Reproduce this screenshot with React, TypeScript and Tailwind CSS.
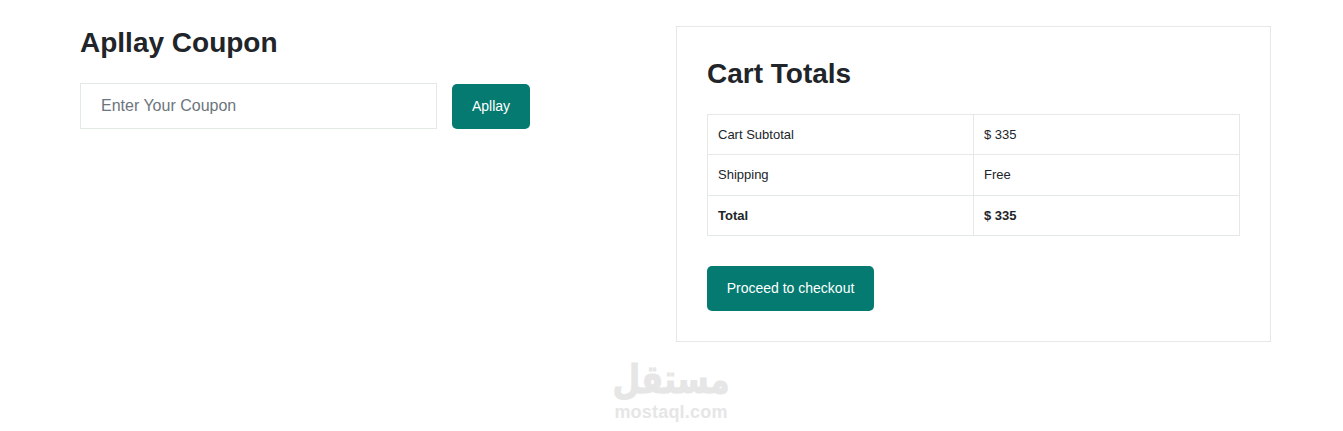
export default function App() {
  return (
    <div className="relative h-[431px] w-full overflow-hidden bg-white font-['Liberation_Sans',Arial,sans-serif] text-[#212529]">
      <div className="flex items-start pl-[80px] pt-[26px]">
        {/* Coupon */}
        <div className="w-[596px] shrink-0">
          <h2 className="text-[28px] leading-[34px] font-bold">Apllay Coupon</h2>
          <div className="mt-[23px] flex items-start gap-[15px]">
            <input
              placeholder="Enter Your Coupon"
              className="h-[46px] w-[357px] border border-[#e3e9e3] px-5 text-base outline-none placeholder:text-[#6c757d]"
            />
            <button className="mt-px h-[45px] w-[78px] rounded-[5px] bg-[#047a70] pb-[2px] text-sm text-white">
              Apllay
            </button>
          </div>
        </div>

        {/* Totals */}
        <div className="h-[316px] w-[595px] shrink-0 border border-[#e3e9e3] px-[30px] pt-[30px]">
          <h2 className="text-[28px] leading-[34px] font-bold">Cart Totals</h2>
          <table className="mt-[23px] w-[533px] table-fixed border-collapse text-[13px] leading-[15px]">
            <tbody>
              <tr className="h-[40px]">
                <td className="border border-[#e3e9e3] px-[10px]">Cart Subtotal</td>
                <td className="border border-[#e3e9e3] px-[10px]">$ 335</td>
              </tr>
              <tr className="h-[41px]">
                <td className="border border-[#e3e9e3] px-[10px] pb-[2px]">Shipping</td>
                <td className="border border-[#e3e9e3] px-[10px] pb-[2px]">Free</td>
              </tr>
              <tr className="h-[40px] font-bold">
                <td className="border border-[#e3e9e3] px-[10px]">Total</td>
                <td className="border border-[#e3e9e3] px-[10px]">$ 335</td>
              </tr>
            </tbody>
          </table>
          <button className="mt-[30px] h-[45px] w-[167px] rounded-[5px] bg-[#047a70] pb-[2px] text-sm text-white">
            Proceed to checkout
          </button>
        </div>
      </div>

      {/* Watermark */}
      <div className="absolute left-[612px] top-[366px] flex w-[118px] flex-col items-center text-[#e6e6e6]">
        <span
          dir="rtl"
          className="origin-bottom scale-y-125 font-['DejaVu_Sans',sans-serif] text-[32px] leading-[36px] font-bold [-webkit-text-stroke:0.8px_#e6e6e6]"
        >
          مستقل
        </span>
        <span className="text-[18px] leading-[20px] font-bold tracking-[0.2px]">mostaql.com</span>
      </div>
    </div>
  );
}
